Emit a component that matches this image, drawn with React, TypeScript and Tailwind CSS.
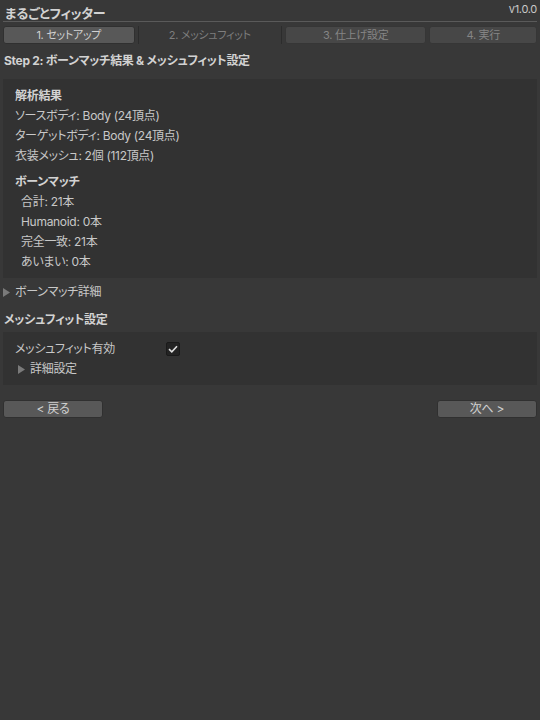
import { useState } from "react";

const font = "font-['Inter','Noto_Sans_CJK_JP',sans-serif] [font-feature-settings:'palt'] tracking-[-0.3px]";

const Tab = ({
  label,
  state,
  width,
}: {
  label: string;
  state: "done" | "current" | "todo";
  width: string;
}) => {
  if (state === "current") {
    return (
      <div className={`${width} h-[18px] flex items-center justify-center text-[11px] text-[#7e7e7e] border-x border-[#2c2c2c]`}>
        {label}
      </div>
    );
  }
  return (
    <div
      className={
        state === "done"
          ? `${width} h-[18px] flex items-center justify-center text-[11px] text-[#d0d0d0] bg-[#585858] rounded-[3px] border border-[#303030]`
          : `${width} h-[18px] flex items-center justify-center text-[11px] text-[#858585] bg-[#474747] rounded-[3px] border border-[#363636]`
      }
    >
      {label}
    </div>
  );
};

const Foldout = ({ label }: { label: string }) => (
  <div className="flex items-center h-5 gap-[5px]">
    <svg width="7" height="9" viewBox="0 0 7 9">
      <path d="M0 0 L7 4.5 L0 9 Z" fill="#7a7a7a" />
    </svg>
    <span>{label}</span>
  </div>
);

const App = () => {
  const [fitEnabled, setFitEnabled] = useState(true);

  return (
    <div className={`w-[540px] h-[720px] bg-[#383838] text-[#c8c8c8] text-[12px] leading-5 ${font}`}>
      <div className="relative px-[3px]">
        <div className="absolute right-[3px] top-[1px] text-[11px] leading-4 text-[#c8c8c8]">v1.0.0</div>
        <div className="pt-[6px] h-[22px] border-b border-[#5a5a5a] text-[13px] leading-[15px] font-bold text-[#d2d2d2] pl-[2px]">
          まるごとフィッター
        </div>
        <div className="flex gap-[3px] mt-[4px]">
          <Tab label="1. セットアップ" state="done" width="w-[132px]" />
          <Tab label="2. メッシュフィット" state="current" width="w-[145px]" />
          <Tab label="3. 仕上げ設定" state="todo" width="w-[142px]" />
          <Tab label="4. 実行" state="todo" width="w-[108px]" />
        </div>
      </div>

      <div className="px-[4px] mt-[7px] font-bold text-[#d2d2d2] h-5 flex items-center">
        Step 2: ボーンマッチ結果 &amp; メッシュフィット設定
      </div>

      <div className="mx-[3px] mt-[8px] bg-[#323232] px-[12px] pt-[7px] pb-[6px]">
        <div className="font-bold text-[#d2d2d2]">解析結果</div>
        <div>ソースボディ: Body (24頂点)</div>
        <div>ターゲットボディ: Body (24頂点)</div>
        <div>衣装メッシュ: 2個 (112頂点)</div>
        <div className="font-bold text-[#d2d2d2] mt-[6px]">ボーンマッチ</div>
        <div className="pl-[6px]">
          <div>合計: 21本</div>
          <div>Humanoid: 0本</div>
          <div>完全一致: 21本</div>
          <div>あいまい: 0本</div>
        </div>
      </div>

      <div className="px-[3px] mt-[4px]">
        <Foldout label="ボーンマッチ詳細" />
      </div>

      <div className="px-[4px] mt-[8px] font-bold text-[#d2d2d2]">メッシュフィット設定</div>

      <div className="mx-[3px] mt-[2px] bg-[#323232] px-[12px] pt-[7px] pb-[6px]">
        <div className="flex items-center h-5">
          <span className="w-[151px]">メッシュフィット有効</span>
          <button
            onClick={() => setFitEnabled(!fitEnabled)}
            className="w-[14px] h-[14px] bg-[#232323] border border-[#1a1a1a] rounded-[2px] flex items-center justify-center"
          >
            {fitEnabled && (
              <svg width="10" height="8" viewBox="0 0 10 8">
                <path d="M1 4.2 L3.8 6.8 L9 1.2" stroke="#e0e0e0" strokeWidth="1.6" fill="none" />
              </svg>
            )}
          </button>
        </div>
        <div className="pl-[3px]">
          <Foldout label="詳細設定" />
        </div>
      </div>

      <div className="flex justify-between px-[3px] mt-[15px]">
        <button className="w-[100px] h-[18px] bg-[#585858] border border-[#303030] rounded-[3px] text-[12px] leading-4 text-[#d0d0d0]">
          &lt; 戻る
        </button>
        <button className="w-[100px] h-[18px] bg-[#585858] border border-[#303030] rounded-[3px] text-[12px] leading-4 text-[#d0d0d0]">
          次へ &gt;
        </button>
      </div>
    </div>
  );
};

export default App;
